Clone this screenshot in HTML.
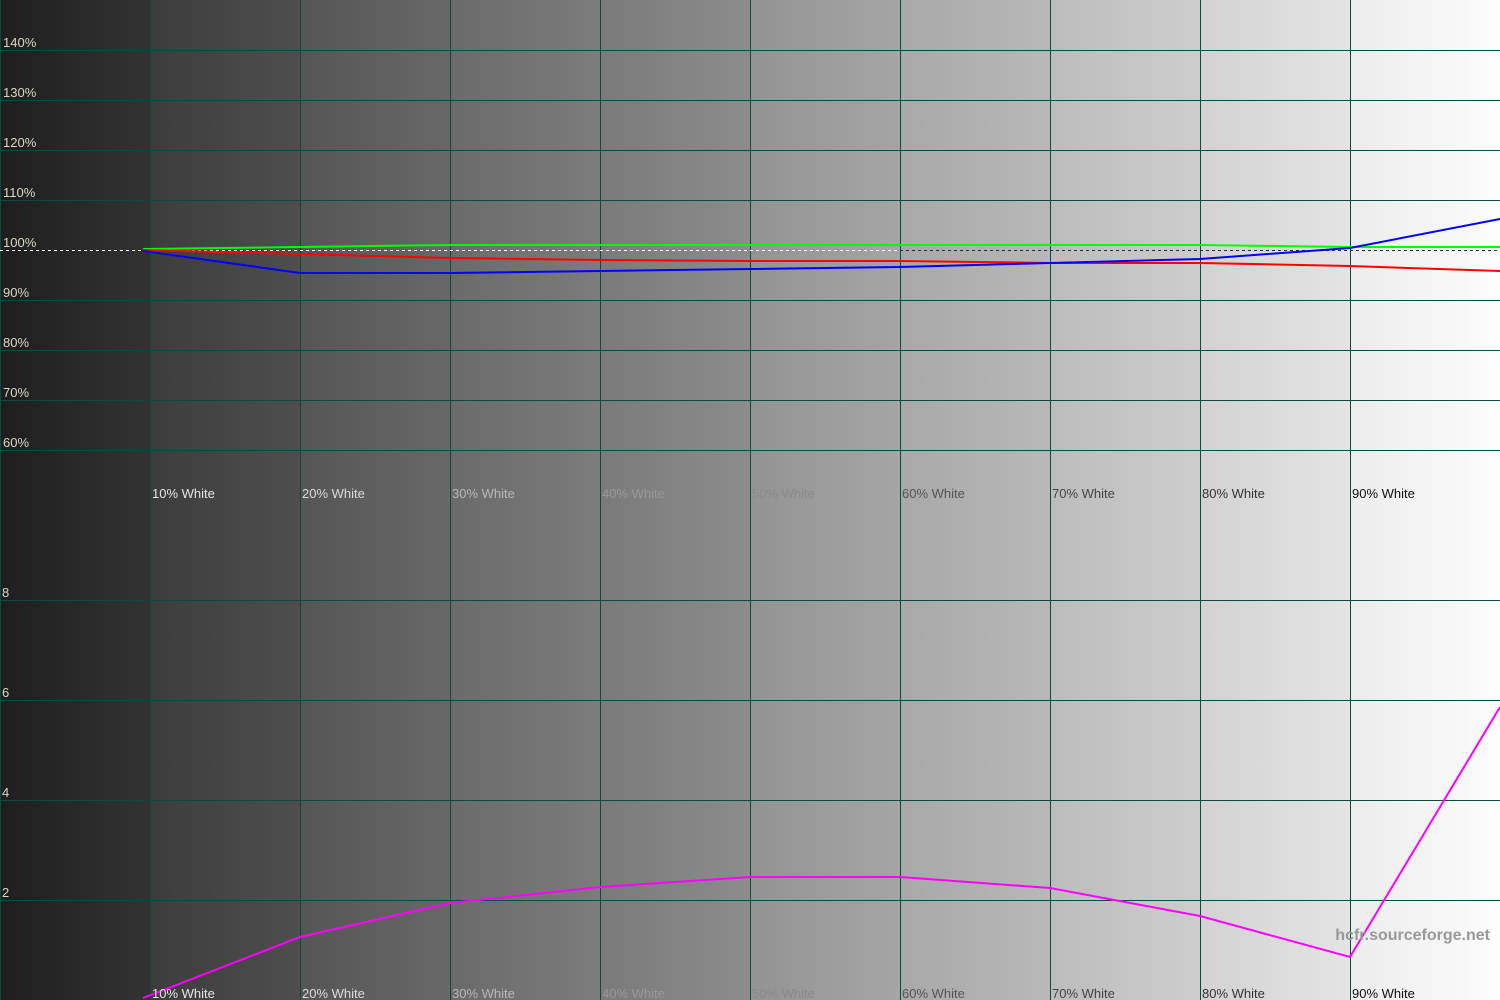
<!DOCTYPE html>
<html><head><meta charset="utf-8"><style>
html,body{margin:0;padding:0;width:1500px;height:1000px;overflow:hidden;background:#000;position:relative}
.c{position:absolute;top:0;height:1000px;width:150px}
svg{position:absolute;left:0;top:0;display:block}
text{font-family:"Liberation Sans",Arial,sans-serif;font-size:13px}
</style></head><body>
<div class="c" style="left:0;background:linear-gradient(to right,#1e1e1e,#333)"></div>
<div class="c" style="left:150px;background:linear-gradient(to right,#3c3c3c,#4e4e4e)"></div>
<div class="c" style="left:300px;background:linear-gradient(to right,#555,#686868)"></div>
<div class="c" style="left:450px;background:linear-gradient(to right,#6a6a6a,#7c7c7c)"></div>
<div class="c" style="left:600px;background:linear-gradient(to right,#7a7a7a,#8c8c8c)"></div>
<div class="c" style="left:750px;background:linear-gradient(to right,#939393,#a5a5a5)"></div>
<div class="c" style="left:900px;background:linear-gradient(to right,#a8a8a8,#b8b8b8)"></div>
<div class="c" style="left:1050px;background:linear-gradient(to right,#bcbcbc,#cdcdcd)"></div>
<div class="c" style="left:1200px;background:linear-gradient(to right,#d2d2d2,#e4e4e4)"></div>
<div class="c" style="left:1350px;background:linear-gradient(to right,#ececec,#fcfcfc)"></div>
<svg width="1500" height="1000" xmlns="http://www.w3.org/2000/svg" shape-rendering="crispEdges">
<g stroke="#0b4a44" stroke-width="1">
<path d="M0.5 0V1000M150.5 0V1000M300.5 0V1000M450.5 0V1000M600.5 0V1000M750.5 0V1000M900.5 0V1000M1050.5 0V1000M1200.5 0V1000M1350.5 0V1000"/>
<path d="M0 50.5H1500M0 100.5H1500M0 150.5H1500M0 200.5H1500M0 300.5H1500M0 350.5H1500M0 400.5H1500M0 450.5H1500M0 600.5H1500M0 700.5H1500M0 800.5H1500M0 900.5H1500"/>
</g>
<path d="M0 250.5H900" stroke="#fff" stroke-dasharray="3,3"/>
<path d="M900 250.5H1500" stroke="#0b3a38" stroke-dasharray="3,3"/>
<g fill="none" stroke-width="2" shape-rendering="auto">
<polyline stroke="#00ff00" points="143,249 300,247 450,245 600,245 750,245 900,245 1050,245 1200,245 1350,247 1500,247"/>
<polyline stroke="#ff0000" points="143,250 300,254 450,258 600,260 750,261 900,261 1050,263 1200,263 1350,266 1500,271"/>
<polyline stroke="#0000ff" points="143,251 300,273 450,273 600,271 750,269 900,267 1050,263 1200,259 1350,248 1500,219"/>
<polyline stroke="#ff00ff" points="143,998 300,937 450,903 600,887 750,877 900,877 1050,888 1200,916 1350,957 1500,707"/>
</g>
<g fill="#d8d8c8">
<text x="3" y="47">140%</text><text x="3" y="97">130%</text><text x="3" y="147">120%</text><text x="3" y="197">110%</text><text x="3" y="247">100%</text><text x="3" y="297">90%</text><text x="3" y="347">80%</text><text x="3" y="397">70%</text><text x="3" y="447">60%</text>
<text x="2" y="597">8</text><text x="2" y="697">6</text><text x="2" y="797">4</text><text x="2" y="897">2</text>
</g>
<g>
<text x="152" y="498" fill="#e6e6e6">10% White</text>
<text x="302" y="498" fill="#dcdcdc">20% White</text>
<text x="452" y="498" fill="#b8b8b8">30% White</text>
<text x="602" y="498" fill="#989898">40% White</text>
<text x="752" y="498" fill="#8a8a8a">50% White</text>
<text x="902" y="498" fill="#555">60% White</text>
<text x="1052" y="498" fill="#444">70% White</text>
<text x="1202" y="498" fill="#333">80% White</text>
<text x="1352" y="498" fill="#111">90% White</text>
<text x="152" y="998" fill="#e6e6e6">10% White</text>
<text x="302" y="998" fill="#dcdcdc">20% White</text>
<text x="452" y="998" fill="#b8b8b8">30% White</text>
<text x="602" y="998" fill="#989898">40% White</text>
<text x="752" y="998" fill="#8a8a8a">50% White</text>
<text x="902" y="998" fill="#555">60% White</text>
<text x="1052" y="998" fill="#444">70% White</text>
<text x="1202" y="998" fill="#333">80% White</text>
<text x="1352" y="998" fill="#111">90% White</text>
</g>
<text x="1490" y="940" text-anchor="end" fill="#999" style="font-size:16px;font-weight:bold">hcfr.sourceforge.net</text>
</svg>
</body></html>
